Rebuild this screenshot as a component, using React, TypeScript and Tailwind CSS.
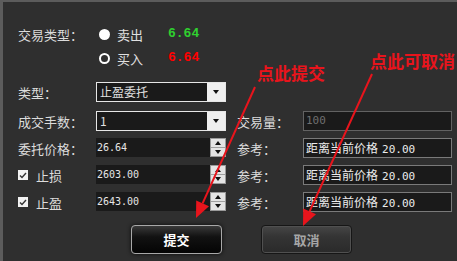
import React from 'react';

const cjk = '"Noto Sans CJK SC", "Noto Sans", sans-serif';
const mono = '"DejaVu Sans Mono", "Liberation Mono", monospace';
const courier = '"Liberation Mono", monospace';

const Label = ({ text, width = 'w-[78px]' }: { text: string; width?: string }) => (
  <div className={`${width} text-[13px] leading-none text-[#dcdcdc]`}>{text}</div>
);

const SelectBox = ({ value }: { value: string }) => (
  <div className="flex h-5 w-[130px] border border-[#e6e6e6] bg-[#1a1a1a]">
    <div className="flex flex-1 items-center pl-[3px] text-[12px] leading-none text-[#e0e0e0]">{value}</div>
    <div className="flex w-[18px] items-center justify-center bg-[#efefef]">
      <svg width="6" height="4" viewBox="0 0 6 4">
        <polygon points="0,0 6,0 3,4" fill="#111" />
      </svg>
    </div>
  </div>
);

const SpinInput = ({ value }: { value: string }) => (
  <div className="flex h-5 w-[130px]">
    <div
      className="flex h-[19px] w-[114px] items-center bg-[#1a1a1a] pl-[1px] text-[10px] text-[#e6e6e6]"
      style={{ fontFamily: mono }}
    >
      {value}
    </div>
    <div className="flex h-[19px] w-4 flex-col border border-[#9a9a9a] bg-[#e4e4e4]">
      <div className="flex flex-1 items-center justify-center border-b border-[#a0a0a0]">
        <svg width="6" height="4" viewBox="0 0 6 4">
          <polygon points="3,0 6,4 0,4" fill="#111" />
        </svg>
      </div>
      <div className="flex flex-1 items-center justify-center">
        <svg width="6" height="4" viewBox="0 0 6 4">
          <polygon points="0,0 6,0 3,4" fill="#111" />
        </svg>
      </div>
    </div>
  </div>
);

const RightInput = ({ value, muted }: { value: string; muted?: boolean }) => (
  <div
    className={`flex h-5 w-[149px] items-center border bg-[#1a1a1a] pl-[2px] ${
      muted ? 'border-[#626262] text-[#6f6f6f]' : 'border-[#7a7a7a] text-[#ececec]'
    }`}
  >
    {muted ? (
      <span className="text-[11px]" style={{ fontFamily: mono }}>{value}</span>
    ) : (
      <span className="text-[12px] leading-none">
        距离当前价格<span className="ml-[4px] text-[11px]" style={{ fontFamily: mono }}>{value}</span>
      </span>
    )}
  </div>
);

const Check = ({ text }: { text: string }) => (
  <div className="flex w-[78px] items-center">
    <div className="flex h-[10px] w-[10px] items-center justify-center bg-[#f2f2f2]">
      <svg width="8" height="7" viewBox="0 0 8 7">
        <polyline points="1,3.5 3,5.5 7,1" fill="none" stroke="#333" strokeWidth="1.4" />
      </svg>
    </div>
    <span className="ml-2 text-[13px] leading-none text-[#dcdcdc]">{text}</span>
  </div>
);

export default function App() {
  return (
    <div
      className="relative h-[261px] w-[457px] overflow-hidden border-t-2 border-l-[3px] border-[#5c5c5c] bg-[#2f2f2f]"
      style={{ fontFamily: cjk }}
    >
      <div className="pl-[15px] pt-[22px]">
        {/* trade type */}
        <div className="flex h-5 items-center">
          <Label text="交易类型：" width="w-[81px]" />
          <div className="h-[11px] w-[11px] rounded-full bg-white" />
          <span className="ml-[7px] w-[51px] text-[13px] leading-none text-[#e0e0e0]">卖出</span>
          <span className="text-[13px] font-bold text-[#2fd02f]" style={{ fontFamily: courier }}>6.64</span>
        </div>
        <div className="mt-1 flex h-5 items-center">
          <div className="w-[81px]" />
          <div className="h-[11px] w-[11px] rounded-full border-2 border-white" />
          <span className="ml-[7px] w-[51px] text-[13px] leading-none text-[#e0e0e0]">买入</span>
          <span className="text-[13px] font-bold text-[#ff0000]" style={{ fontFamily: courier }}>6.64</span>
        </div>

        <div className="mt-[14px] flex h-5 items-center">
          <Label text="类型：" />
          <SelectBox value="止盈委托" />
        </div>
        <div className="mt-[9px] flex h-5 items-center">
          <Label text="成交手数：" />
          <SelectBox value="1" />
          <div className="ml-[11px]"><Label text="交易量：" width="w-[66px]" /></div>
          <RightInput value="100" muted />
        </div>
        <div className="mt-[7px] flex h-5 items-center">
          <Label text="委托价格：" />
          <SpinInput value="26.64" />
          <div className="ml-[11px]"><Label text="参考：" width="w-[66px]" /></div>
          <RightInput value="20.00" />
        </div>
        <div className="mt-[7px] flex h-5 items-center">
          <Check text="止损" />
          <SpinInput value="2603.00" />
          <div className="ml-[11px]"><Label text="参考：" width="w-[66px]" /></div>
          <RightInput value="20.00" />
        </div>
        <div className="mt-[7px] flex h-5 items-center">
          <Check text="止盈" />
          <SpinInput value="2643.00" />
          <div className="ml-[11px]"><Label text="参考：" width="w-[66px]" /></div>
          <RightInput value="20.00" />
        </div>

        <div className="mt-[13px] flex gap-[39px] pl-[113px]">
          <button className="flex h-[29px] w-[91px] items-center justify-center rounded-[4px] border border-[#a8a8a8] bg-linear-to-b from-[#3a3a3a] via-[#121212] via-40% to-[#050505] text-[13px] font-bold text-white shadow-[0_0_4px_rgba(0,0,0,0.8)]">
            提交
          </button>
          <button className="flex h-[29px] w-[91px] items-center justify-center rounded-[4px] border border-[#161616] bg-linear-to-b from-[#464646] via-[#343434] via-40% to-[#2a2a2a] text-[13px] font-bold text-[#a6a6a6] shadow-[inset_0_0_0_1px_#505050]">
            取消
          </button>
        </div>
      </div>

      {/* annotations */}
      <div className="absolute left-[254px] top-[62px] text-[17px] font-bold leading-none text-[#e8141c]">点此提交</div>
      <div className="absolute left-[367px] top-[50px] text-[17px] font-bold leading-none text-[#e8141c]">点此可取消</div>
      <svg className="pointer-events-none absolute -left-[3px] -top-[2px]" width="457" height="261" viewBox="0 0 457 261">
        <line x1="255" y1="87" x2="202.6" y2="203.4" stroke="#e8141c" strokeWidth="2" />
        <polygon points="196,218 209,206.3 196.2,200.5" fill="#e8141c" />
        <line x1="372" y1="74" x2="309.6" y2="211.4" stroke="#e8141c" strokeWidth="2" />
        <polygon points="303,226 316,214.3 303.2,208.5" fill="#e8141c" />
      </svg>
    </div>
  );
}
